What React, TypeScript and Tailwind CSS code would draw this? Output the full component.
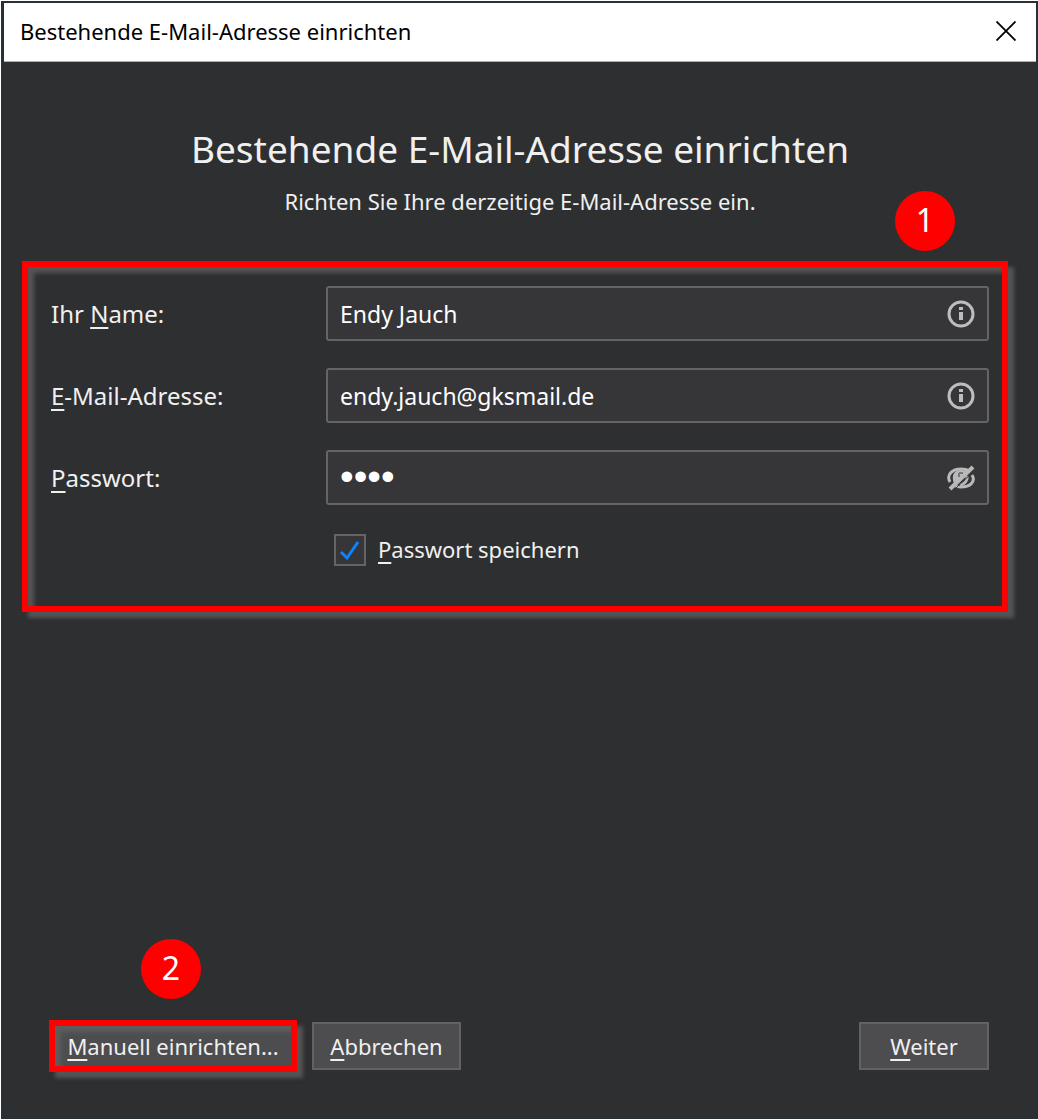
import { useState } from "react";
import type { ReactNode } from "react";

const HotKey = ({ children }: { children: ReactNode }) => (
  <span className="underline decoration-2 underline-offset-4 [text-decoration-skip-ink:none]">{children}</span>
);

const InfoIcon = () => (
  <svg viewBox="0 0 28 28" className="h-7 w-7" fill="none" aria-hidden="true">
    <circle cx="14" cy="14" r="12" stroke="#bdbdbd" strokeWidth="3" />
    <path d="M14 7v3M14 12v8" stroke="#bdbdbd" strokeWidth="4" />
  </svg>
);

const EyeOffIcon = () => (
  <svg viewBox="0 0 28 28" className="h-7 w-7" fill="none" aria-hidden="true">
    <path
      d="M3 18C-1 11 5 5 14 5c4 0 7 1 9 2M25 11c4 7-2 12-11 12-2 0-4 0-5-1"
      stroke="#b9b9b9"
      strokeWidth="3"
    />
    <path d="M6 16c-1-6 2-10 8-10 4 0 6 1 7 2L8 20c-1-1-2-2-2-4z" fill="#b9b9b9" />
    <path d="M12 9h4M12 9v4" stroke="#77787a" strokeWidth="2" />
    <path d="M20 12c1 4-2 8-7 9" stroke="#b9b9b9" strokeWidth="3" />
    <path d="M3 25L26 3" stroke="#b9b9b9" strokeWidth="4" />
    <path d="M8 25L26 8" stroke="#363638" strokeWidth="1" />
  </svg>
);

const StepBadge = ({ step, className }: { step: number; className: string }) => (
  <div
    className={`absolute flex h-15 w-15 items-center justify-center rounded-full bg-[#ff0000] pb-0.5 text-[32px] leading-8 text-white ${className}`}
  >
    {step}
  </div>
);

interface FieldProps {
  id: string;
  label: ReactNode;
  type?: string;
  value: string;
  onChange: (value: string) => void;
  action: string;
  onAction?: () => void;
  icon: ReactNode;
}

const Field = ({ id, label, type = "text", value, onChange, action, onAction, icon }: FieldProps) => (
  <div className="flex items-center">
    <label htmlFor={id} className="w-[275px] shrink-0 text-2xl">
      {label}
    </label>
    <div className="flex h-[55px] min-w-0 flex-1 items-center rounded-[3px] border-2 border-[#646467] bg-[#363638] px-3">
      <input
        id={id}
        type={type}
        value={value}
        onChange={(e) => onChange(e.target.value)}
        className={
          type === "password"
            ? "h-12 min-w-0 flex-1 bg-transparent font-['Liberation_Sans',sans-serif] text-[39px] text-white outline-none"
            : "h-12 min-w-0 flex-1 bg-transparent text-[23px] text-white outline-none"
        }
      />
      <button type="button" aria-label={action} onClick={onAction}>
        {icon}
      </button>
    </div>
  </div>
);

const App = () => {
  const [name, setName] = useState("Endy Jauch");
  const [email, setEmail] = useState("endy.jauch@gksmail.de");
  const [password, setPassword] = useState("1234");
  const [remember, setRemember] = useState(true);
  const [showPassword, setShowPassword] = useState(false);

  return (
    <div className="flex min-h-screen flex-col bg-white pt-px pb-px pl-px font-['Noto_Sans',sans-serif]">
      <div className="flex flex-1 flex-col border-2 border-l-3 border-[#273036] bg-[#2e2f31] text-[#f0f0f0]">
        <header className="flex h-[59px] items-center justify-between border-b border-[#a9b3ab] bg-white px-4 pb-0.5 text-black">
          <span className="text-[22px]">Bestehende E-Mail-Adresse einrichten</span>
          <button type="button" aria-label="Schließen" className="p-1">
            <svg viewBox="0 0 20 20" className="h-5 w-5" aria-hidden="true">
              <path d="M0.5 0.5l19 19M19.5 0.5l-19 19" stroke="#000" strokeWidth="1.8" />
            </svg>
          </button>
        </header>

        <form className="flex flex-1 flex-col" onSubmit={(e) => e.preventDefault()}>
          <div className="pt-[63px] text-center">
            <h1 className="text-[37px] leading-12">Bestehende E-Mail-Adresse einrichten</h1>
            <p className="mt-3 text-[22px] leading-8">Richten Sie Ihre derzeitige E-Mail-Adresse ein.</p>
          </div>

          <div className="relative mt-11 mr-7 ml-[18px] flex flex-col gap-[27px] border-6 border-[#ff0000] pt-[19px] pr-[13px] pb-10 pl-[23px] shadow-[6px_6px_4px_#555555,inset_6px_6px_4px_#555555]">
            <StepBadge step={1} className="-top-[76px] right-[47px]" />
            <Field
              id="name"
              label={<>Ihr <HotKey>N</HotKey>ame:</>}
              value={name}
              onChange={setName}
              action="Info"
              icon={<InfoIcon />}
            />
            <Field
              id="email"
              label={<><HotKey>E</HotKey>-Mail-Adresse:</>}
              value={email}
              onChange={setEmail}
              action="Info"
              icon={<InfoIcon />}
            />
            <Field
              id="password"
              label={<><HotKey>P</HotKey>asswort:</>}
              type={showPassword ? "text" : "password"}
              value={password}
              onChange={setPassword}
              action="Passwort anzeigen"
              onAction={() => setShowPassword(!showPassword)}
              icon={<EyeOffIcon />}
            />
            <div className="flex items-center gap-3 pt-px pl-[283px]">
              <div className="relative h-8 w-8">
                <input
                  id="remember"
                  type="checkbox"
                  checked={remember}
                  onChange={(e) => setRemember(e.target.checked)}
                  className="block h-8 w-8 appearance-none border-2 border-[#646467] bg-[#363638]"
                />
                {remember && (
                  <svg viewBox="0 0 32 32" className="pointer-events-none absolute inset-0" fill="none" aria-hidden="true">
                    <path d="M7 18l6 6L24 8" stroke="#0a84ff" strokeWidth="3" />
                  </svg>
                )}
              </div>
              <label htmlFor="remember" className="text-[22px]">
                <HotKey>P</HotKey>asswort speichern
              </label>
            </div>
          </div>

          <footer className="mt-auto flex items-center pr-[47px] pb-[45px] pl-[45px]">
            <div className="relative">
              <StepBadge step={2} className="-top-[81px] left-[92px]" />
              <button
                type="button"
                className="block h-[52px] w-[248px] border-6 border-[#ff0000] bg-[#4d4d4f] text-[22px] leading-8 shadow-[6px_6px_4px_#555555,inset_6px_6px_4px_#5e5e5e]"
              >
                <HotKey>M</HotKey>anuell einrichten...
              </button>
            </div>
            <button type="button" className="ml-[15px] h-12 w-[149px] border-2 border-[#626264] bg-[#4d4d4f] text-[22px] leading-8">
              <HotKey>A</HotKey>bbrechen
            </button>
            <button type="submit" className="ml-auto h-12 w-[130px] border-2 border-[#626264] bg-[#4d4d4f] text-[22px] leading-8">
              <HotKey>W</HotKey>eiter
            </button>
          </footer>
        </form>
      </div>
    </div>
  );
};

export default App;
